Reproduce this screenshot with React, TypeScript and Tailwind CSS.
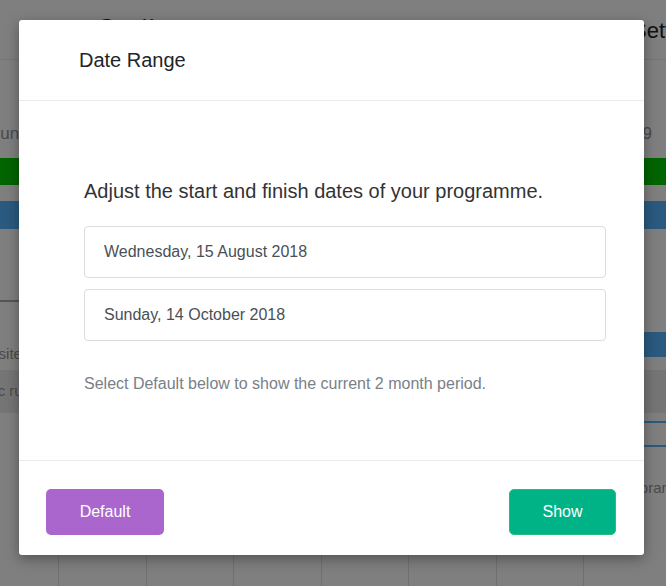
import React from 'react'

const cols = [0, 1, 2, 3, 4, 5, 6, 7]

function BackgroundPage() {
  return (
    <div className="flex h-full w-full flex-col bg-white text-[#222]">
      <div className="flex h-[60px] shrink-0 items-start justify-between border-b border-[#e8e8e8] pl-[98px] pt-[10px]">
        <span className="text-[22px] font-bold">Gantt</span>
        <span className="w-[34px] overflow-hidden whitespace-nowrap pt-[4px] text-[22px]">Settings</span>
      </div>
      <div className="flex h-[98px] shrink-0 items-end justify-between pb-[12px] text-[17px] text-[#959595]">
        <span className="-ml-[12px]">Run</span>
        <span className="pr-[14px]">9</span>
      </div>
      <div className="h-[27px] shrink-0 bg-[#00c800]" />
      <div className="h-[16px] shrink-0" />
      <div className="h-[28px] shrink-0 bg-[#55b5ff]" />
      <div className="h-[73px] w-[30px] shrink-0 border-b-2 border-[#aaaaaa]" />
      <div className="flex h-[31px] shrink-0 justify-end">
        <div className="mt-[30px] h-[25px] w-[30px] bg-[#55b5ff]" />
      </div>
      <div className="flex h-[37px] shrink-0 items-center text-[15px] text-[#959595]">
        <span className="-ml-[32px] pt-[6px]">Website</span>
      </div>
      <div className="flex h-[43px] shrink-0 items-center bg-[#ebebeb] text-[15px] text-[#959595]">
        <span className="-ml-[24px]">Epic run</span>
      </div>
      <div className="flex h-[50px] shrink-0 justify-end">
        <div className="mt-[8px] h-[26px] w-[30px] border-y-2 border-[#55b5ff]" />
      </div>
      <div className="flex h-[50px] shrink-0 items-center justify-end text-[15px] text-[#959595]">
        <span className="-mr-[8px]">Library</span>
      </div>
      <div className="flex flex-1 pl-[58px]">
        {cols.map(c => (
          <div key={c} className="h-full w-[87.5px] shrink-0 border-l border-[#e0e0e0]" />
        ))}
      </div>
    </div>
  )
}

export default function App() {
  return (
    <div className="relative h-[586px] w-[666px] overflow-hidden font-['Liberation_Sans',Arial,sans-serif]">
      <BackgroundPage />
      <div className="absolute inset-0 bg-black/50" />
      <div className="absolute left-[19px] top-[20px] flex h-[535px] w-[625px] flex-col rounded-[3px] bg-white shadow-[0_4px_14px_rgba(0,0,0,0.35)]">
        <div className="flex h-[81px] shrink-0 items-center border-b border-[#e9ecef] pl-[60px] text-[20px] text-[#212529]">
          Date Range
        </div>
        <div className="flex flex-1 flex-col pl-[65px] pr-[38px] pt-[78px]">
          <p className="text-[20px] leading-[24px] text-[#333]">Adjust the start and finish dates of your programme.</p>
          <div className="mt-[23px] flex flex-col gap-[11px]">
            <div className="flex h-[52px] items-center rounded-[4px] border border-[#dcdcdc] px-[19px] text-[16px] text-[#495057]">
              Wednesday, 15 August 2018
            </div>
            <div className="flex h-[52px] items-center rounded-[4px] border border-[#dcdcdc] px-[19px] text-[16px] text-[#495057]">
              Sunday, 14 October 2018
            </div>
          </div>
          <p className="mt-[31px] text-[16px] text-[#7a8088]">Select Default below to show the current 2 month period.</p>
        </div>
        <div className="flex h-[95px] shrink-0 items-start justify-between border-t border-[#e9ecef] pl-[27px] pr-[28px] pt-[28px]">
          <button className="h-[46px] w-[118px] rounded-[5px] bg-[#aa66cc] text-[16px] text-white">Default</button>
          <button className="h-[46px] w-[107px] rounded-[5px] border border-[#2bbb7f] bg-[#00b386] text-[16px] text-white">Show</button>
        </div>
      </div>
    </div>
  )
}
